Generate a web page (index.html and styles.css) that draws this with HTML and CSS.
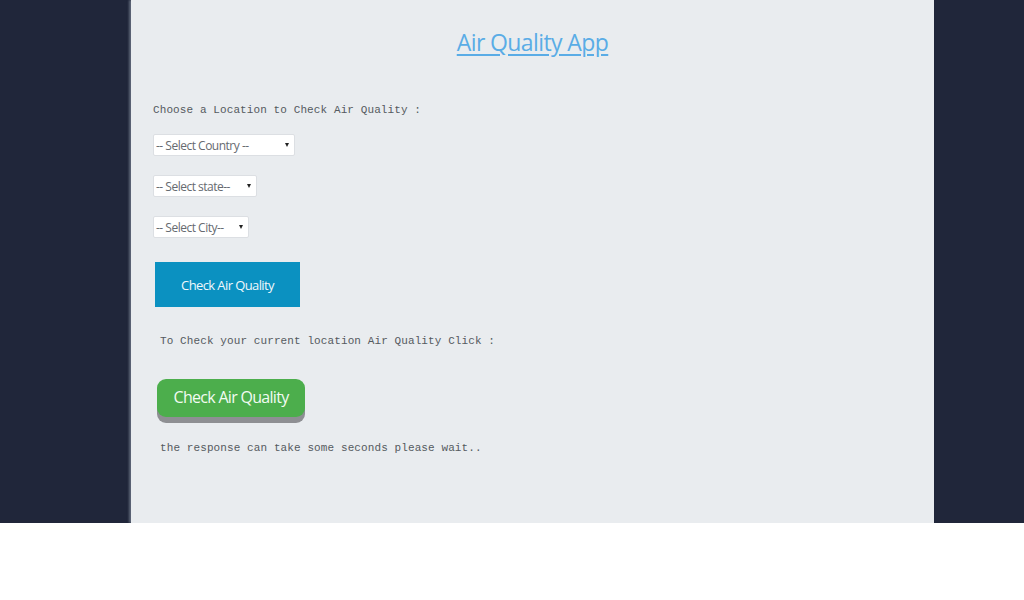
FILE: index.html
```html
<!DOCTYPE html>
<html>
<head>
<meta charset="utf-8">
<title>Air Quality App</title>
<link rel="stylesheet" href="styles.css">
</head>
<body>
<div class="stage">
  <div class="side"></div>
  <main class="panel">
    <h1 class="title"><a href="#">Air Quality App</a></h1>
    <p class="label first">Choose a Location to Check Air Quality :</p>
    <div class="selects">
      <span class="sel w-country"><select><option>-- Select Country --</option></select></span>
      <span class="sel w-state"><select><option>-- Select state--</option></select></span>
      <span class="sel w-city"><select><option>-- Select City--</option></select></span>
    </div>
    <button class="btn-blue">Check Air Quality</button>
    <p class="label second">To Check your current location Air Quality Click :</p>
    <button class="btn-green">Check Air Quality</button>
    <p class="label third">the response can take some seconds please wait..</p>
  </main>
  <div class="side right"></div>
</div>
</body>
</html>
```

FILE: styles.css
```css
html, body {
  margin: 0;
  padding: 0;
  background: #ffffff;
}

.stage {
  display: flex;
  height: 523px;
  background: #20263a;
}

.side {
  width: 128px;
  flex: none;
}

.side.right {
  flex: 1;
  width: auto;
}

.panel {
  width: 781px;
  flex: none;
  margin-left: 3px;
  padding-left: 22px;
  background: #e9ecef;
  box-shadow: -2px 0 2px rgba(120, 130, 145, 0.7);
  display: flex;
  flex-direction: column;
  align-items: flex-start;
}

.title {
  align-self: stretch;
  margin: 27px 0 0 -22px;
  text-align: center;
  font-family: "Open Sans", sans-serif;
  font-weight: normal;
  font-size: 23px;
  line-height: 30px;
  letter-spacing: -0.6px;
}

.title a {
  color: #5aace6;
  text-decoration: underline;
  text-underline-offset: 3px;
}

.label {
  margin: 0;
  font-family: "Liberation Mono", "DejaVu Sans Mono", monospace;
  font-size: 11px;
  line-height: 14px;
  letter-spacing: 0.1px;
  color: #555a60;
}

.label.first {
  margin-top: 46px;
}

.selects {
  display: flex;
  flex-direction: column;
  align-items: flex-start;
  gap: 19px;
  margin-top: 17px;
}

.sel {
  position: relative;
  display: block;
  height: 22px;
}

.sel select {
  appearance: none;
  -webkit-appearance: none;
  height: 22px;
  width: 100%;
  margin: 0;
  padding: 0 0 0 2px;
  border: 1px solid #dcdfe3;
  border-radius: 2px;
  background: #ffffff;
  font-family: "Open Sans", sans-serif;
  font-size: 12px;
  letter-spacing: -0.5px;
  color: #666a70;
}

.sel::after {
  content: "";
  position: absolute;
  right: 6px;
  top: 9px;
  border-left: 2.5px solid transparent;
  border-right: 2.5px solid transparent;
  border-top: 4px solid #222;
  pointer-events: none;
}

.w-country { width: 142px; }
.w-state { width: 104px; }
.w-city { width: 96px; }

.btn-blue {
  margin: 24px 0 0 2px;
  width: 145px;
  height: 45px;
  border: none;
  background: #0b91c1;
  color: #f0f8fc;
  font-family: "Open Sans", sans-serif;
  font-size: 13px;
  letter-spacing: -0.6px;
  padding: 0;
}

.label.second {
  margin: 27px 0 0 7px;
}

.btn-green {
  margin: 31px 0 0 4px;
  width: 148px;
  height: 38px;
  border: none;
  border-radius: 9px;
  background: #4cae4c;
  color: #f2fbf2;
  font-family: "Open Sans", sans-serif;
  font-size: 16px;
  letter-spacing: -0.7px;
  padding: 0 0 2px;
  box-shadow: 0 6px 0 #8e8f93;
}

.label.third {
  margin: 24px 0 0 7px;
}
```
